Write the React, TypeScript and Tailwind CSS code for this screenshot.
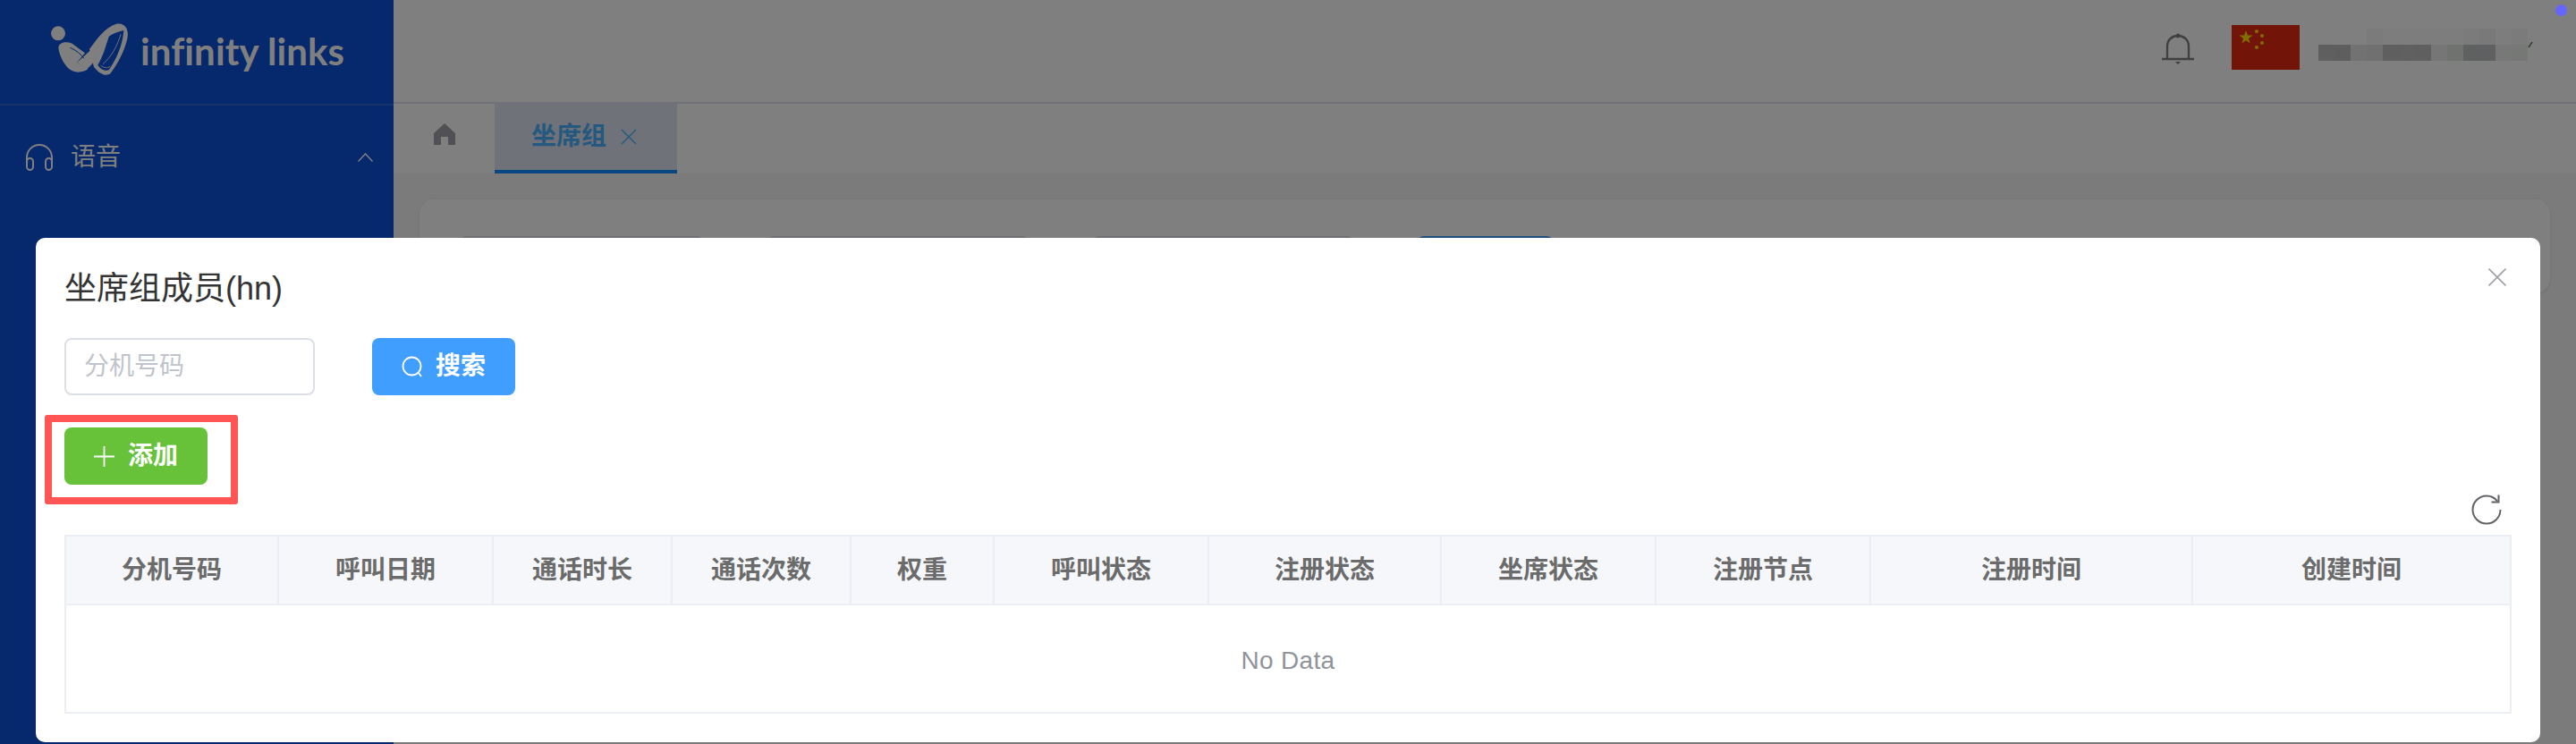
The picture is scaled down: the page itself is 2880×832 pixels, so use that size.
import React from "react";

const columns = ["分机号码", "呼叫日期", "通话时长", "通话次数", "权重", "呼叫状态", "注册状态", "坐席状态", "注册节点", "注册时间", "创建时间"];

const mosaicTop = ["bg-[#fefefe]", "bg-[#fefefe]", "bg-[#fefefe]", "bg-[#f6f6f6]", "bg-[#fafafa]", "bg-[#fafafa]", "bg-[#fafafa]", "bg-[#fafafa]", "bg-[#fafafa]", "bg-[#f6f6f6]", "bg-[#f2f2f2]", "bg-[#fafafa]", "bg-[#f6f6f6]"];
const mosaicBottom = ["bg-[#bebebe]", "bg-[#bcbcbc]", "bg-[#e4e4e4]", "bg-[#e0e0e0]", "bg-[#bebebe]", "bg-[#c0c0c0]", "bg-[#bebebe]", "bg-[#ececec]", "bg-[#e0e4e0]", "bg-[#bec2c0]", "bg-[#bec0c4]", "bg-[#f0f0f0]", "bg-[#ecf0ec]"];

const Logo = () => (
    <svg width="100" height="70" viewBox="0 0 300 210" className="mb-[6px] shrink-0">
        <circle cx="45" cy="52" r="24" fill="#fff" />
        <path d="M150 105 C175 70 205 30 240 20 C270 14 284 40 277 70 C268 110 245 155 220 187 C205 197 185 190 165 165 Z" fill="#fff" />
        <path d="M215 62 C230 52 250 45 265 42 C262 90 240 140 215 175 C200 180 185 170 178 158 C195 130 205 95 215 62 Z" fill="#0c50d8" />
        <path d="M255 55 C245 90 225 130 195 155 M188 160 C200 168 210 170 220 162" fill="none" stroke="#fff" strokeWidth="2.5" />
        <path d="M108 150 L218 50 C205 95 185 130 142 172 Z" fill="#fff" />
        <path d="M46 100 C48 82 72 78 92 86 L135 118 L108 150 L145 172 C125 185 95 188 75 165 C58 145 48 120 46 100 Z" fill="#fff" />
        <path d="M85 100 C105 108 122 122 132 136" fill="none" stroke="#0c50d8" strokeWidth="3" />
    </svg>
);

const Sidebar = () => (
    <aside className="w-[440px] shrink-0 bg-[#0c50d8] text-white">
        <div className="flex h-[118px] items-center border-b-2 border-[#2e62de] pl-[50px]">
            <Logo />
            <span className="mb-[2px] ml-[7px] font-['Lato',sans-serif] text-[42px] font-bold leading-none tracking-[0.1px]">infinity links</span>
        </div>
        <div className="flex h-[116px] items-center pl-[28px] pr-[23px]">
            <svg width="32" height="30" viewBox="0 0 32 30" fill="none" stroke="currentColor" strokeWidth="2">
                <path d="M2 20 V15 A14 14 0 0 1 30 15 V20" />
                <rect x="2" y="16" width="7" height="13" rx="3.5" />
                <rect x="23" y="16" width="7" height="13" rx="3.5" />
            </svg>
            <span className="ml-[19px] flex-1 text-[28px] leading-none">语音</span>
            <svg width="17" height="10" viewBox="0 0 17 10" fill="none" stroke="currentColor" strokeWidth="1.5">
                <path d="M0.5 9.5 L8.5 1 L16.5 9.5" />
            </svg>
        </div>
    </aside>
);

const Bell = () => (
    <svg width="36" height="36" viewBox="0 0 36 36" fill="none" stroke="#808080" strokeWidth="2.4" className="mt-[9px]">
        <path d="M6 28 V15 C6 7 12 3 18 3 C24 3 30 7 30 15 V28" />
        <path d="M0 29 H36" strokeWidth="2.6" />
        <circle cx="18" cy="3" r="2.4" fill="#808080" stroke="none" />
        <path d="M15 32 H21 L18 35 Z" fill="#808080" stroke="none" />
    </svg>
);

const Flag = () => (
    <svg width="76" height="50" viewBox="0 0 76 50" className="ml-[42px]">
        <rect width="76" height="50" fill="#e62812" />
        <polygon points="16,6 17.9,11.4 23.6,11.5 19,15 20.7,20.5 16,17.2 11.3,20.5 13,15 8.4,11.5 14.1,11.4" fill="#ffde00" />
        <circle cx="28" cy="7" r="2" fill="#ffde00" />
        <circle cx="34" cy="12" r="2" fill="#ffde00" />
        <circle cx="34" cy="20" r="2" fill="#ffde00" />
        <circle cx="28" cy="25" r="2" fill="#ffde00" />
    </svg>
);

const BlurredName = () => (
    <div className="ml-[21px] mt-[4px] flex">
        <div>
            <div className="flex">
                {mosaicTop.map((c, i) => (
                    <div key={i} className={`h-[18px] w-[18px] ${c}`} />
                ))}
            </div>
            <div className="flex">
                {mosaicBottom.map((c, i) => (
                    <div key={i} className={`h-[18px] w-[18px] ${c}`} />
                ))}
            </div>
        </div>
        <svg width="6" height="8" viewBox="0 0 6 8" className="mt-[14px]" fill="none" stroke="#707070" strokeWidth="1.5">
            <path d="M1 7 L5 1" />
        </svg>
    </div>
);

const Tabs = () => (
    <div className="flex h-[78px] bg-white">
        <div className="flex w-[113px] items-center justify-center pb-[10px]">
            <svg width="24" height="24" viewBox="0 0 24 24" fill="#a0a0aa">
                <path d="M12 0 L24 11 V24 H16 V15 H8 V24 H0 V11 Z" />
            </svg>
        </div>
        <div className="flex w-[204px] items-center border-b-4 border-[#148cff] bg-[#dee4f2] pl-[41px] text-[#4ab0ff]">
            <span className="text-[28px] font-bold leading-none">坐席组</span>
            <svg width="18" height="18" viewBox="0 0 18 18" className="ml-[16px]" fill="none" stroke="currentColor" strokeWidth="1.4">
                <path d="M1 1 L17 17 M17 1 L1 17" />
            </svg>
        </div>
    </div>
);

const BackgroundCard = () => (
    <div className="flex-1 px-[29px] pt-[29px]">
        <div className="flex gap-[70px] rounded-[16px] bg-white pl-[44px] pt-[41px] shadow-sm">
            <div className="h-[64px] w-[274px] rounded-[8px] border-2 border-[#dcdfe6]" />
            <div className="h-[64px] w-[294px] rounded-[8px] border-2 border-[#dcdfe6]" />
            <div className="h-[64px] w-[293px] rounded-[8px] border-2 border-[#dcdfe6]" />
            <div className="h-[64px] w-[153px] rounded-[8px] bg-[#409eff]" />
        </div>
    </div>
);

const Modal = () => (
    <div className="absolute left-[40px] top-[266px] h-[564px] w-[2800px] rounded-[10px] bg-white px-[32px] pt-[32px]">
        <svg width="20" height="20" viewBox="0 0 20 20" className="absolute right-[38px] top-[34px]" fill="none" stroke="#a0a0a8" strokeWidth="1.6">
            <path d="M0.5 0.5 L19.5 19.5 M19.5 0.5 L0.5 19.5" />
        </svg>
        <h2 className="text-[36px] font-normal leading-[50px] text-[#333]">坐席组成员(hn)</h2>

        <div className="mt-[30px] flex">
            <div className="flex h-[64px] w-[280px] items-center rounded-[8px] border-2 border-[#dcdfe6] pl-[20px] text-[28px] text-[#c0c4cc]">分机号码</div>
            <button className="ml-[64px] flex h-[64px] w-[160px] items-center justify-center rounded-[8px] bg-[#409eff] text-[28px] font-bold text-white">
                <svg width="24" height="24" viewBox="0 0 24 24" fill="none" stroke="currentColor" strokeWidth="1.8" className="mr-[14px]">
                    <circle cx="11.5" cy="11.5" r="10" />
                    <path d="M18.5 18.5 L22 23" />
                </svg>
                搜索
            </button>
        </div>

        <button className="relative mt-[36px] flex h-[64px] w-[160px] items-center justify-center rounded-[8px] bg-[#67c23a] text-[28px] font-bold text-white">
            <svg width="23" height="23" viewBox="0 0 23 23" fill="none" stroke="currentColor" strokeWidth="1.8" className="mr-[15px]">
                <path d="M11.5 0 V23 M0 11.5 H23" />
            </svg>
            添加
            <span className="absolute -bottom-[22px] -left-[22px] -right-[34px] -top-[14px] rounded-[3px] border-[8px] border-[#ff5555]" />
        </button>

        <div className="mt-[11px] flex justify-end pr-[11px]">
            <svg width="34" height="34" viewBox="0 0 34 34" fill="none" stroke="#606266" strokeWidth="2">
                <path d="M32.5 17 A15.5 15.5 0 1 1 17 1.5 C22 1.5 26 3.5 29 7.5" />
                <path d="M30.5 0.5 V8.5 H22.5" />
            </svg>
        </div>

        <div className="mt-[11px] border-2 border-[#ebeef5]">
            <div className="grid h-[75px] grid-cols-[238px_240px_200px_200px_160px_240px_260px_240px_240px_360px_1fr] bg-[#f5f7fa]">
                {columns.map((name, i) => (
                    <div key={name} className={`flex items-center justify-center text-[28px] font-bold text-[#6b6b6b] ${i < columns.length - 1 ? "border-r-2 border-[#ebeef5]" : ""}`}>
                        {name}
                    </div>
                ))}
            </div>
            <div className="flex h-[121px] items-center justify-center border-t-2 border-[#ebeef5] pt-[4px] text-[28px] tracking-[0.3px] text-[#909399]">No Data</div>
        </div>
    </div>
);

export default function App() {
    return (
        <div className="relative flex h-[832px] w-full overflow-hidden bg-[#f6f6f8] font-['Liberation_Sans','Noto_Sans_CJK_SC',sans-serif]">
            <Sidebar />
            <main className="flex flex-1 flex-col">
                <header className="flex h-[116px] shrink-0 justify-end border-b-2 border-[#e2e2f4] bg-white pr-[48px] pt-[28px]">
                    <Bell />
                    <Flag />
                    <BlurredName />
                </header>
                <Tabs />
                <BackgroundCard />
            </main>
            <div className="absolute inset-0 bg-black/50" />
            <div className="absolute right-[10px] top-[5px] h-[13px] w-[13px] rounded-full bg-[#6666ff]" />
            <Modal />
        </div>
    );
}
